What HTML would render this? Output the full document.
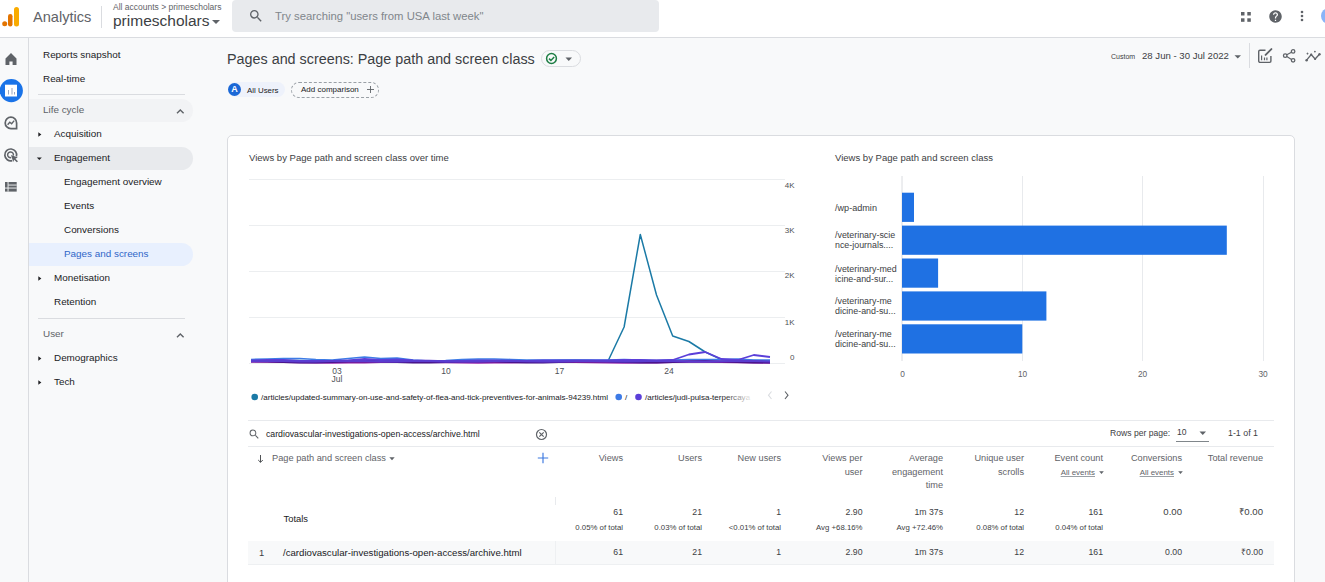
<!DOCTYPE html>
<html><head><meta charset="utf-8">
<style>
*{box-sizing:border-box;margin:0;padding:0}
html,body{width:1325px;height:582px;overflow:hidden;background:#f8f9fa;font-family:"Liberation Sans",sans-serif;color:#202124}
.a{position:absolute;white-space:nowrap}
#hdr{position:absolute;left:0;top:0;width:1325px;height:38px;background:#fff;border-bottom:1px solid #dadce0}
#rail{position:absolute;left:0;top:38px;width:29px;height:544px;border-right:1px solid #dadce0;background:#f8f9fa}
.nav{font-size:9.9px;color:#202124}
.card{position:absolute;left:227px;top:135px;width:1068px;height:460px;background:#fff;border:1px solid #dadce0;border-radius:5px}
</style></head>
<body>
<!-- header -->
<div id="hdr">
  <svg class="a" style="left:0;top:0" width="24" height="37">
    <rect x="14" y="7" width="5" height="19.5" rx="2.5" fill="#f9ab00"/>
    <rect x="8" y="14" width="4.5" height="12.5" rx="2.25" fill="#e37400"/>
    <circle cx="4.7" cy="23.7" r="2.5" fill="#e37400"/>
  </svg>
  <div class="a" style="left:33px;top:9px;font-size:14.6px;color:#5f6368">Analytics</div>
  <div class="a" style="left:101px;top:6px;width:1px;height:22px;background:#dadce0"></div>
  <div class="a" style="left:113px;top:2px;font-size:8.5px;color:#5f6368">All accounts &gt; primescholars</div>
  <div class="a" style="left:113px;top:12px;font-size:15.5px;color:#3c4043">primescholars</div>
  <svg class="a" style="left:212px;top:20px" width="9" height="5"><path d="M0 0h8l-4 4z" fill="#5f6368"/></svg>
  <div class="a" style="left:232px;top:0;width:427px;height:32px;background:#e8eaed;border-radius:4px"></div>
  <svg class="a" style="left:248.4px;top:8px" width="16" height="16" viewBox="0 0 24 24"><path fill="#5f6368" d="M15.5 14h-.79l-.28-.27A6.47 6.47 0 0 0 16 9.5 6.5 6.5 0 1 0 9.5 16c1.61 0 3.09-.59 4.23-1.57l.27.28v.79l5 4.99L20.49 19l-4.99-5zm-6 0C7.01 14 5 11.99 5 9.5S7.01 5 9.5 5 14 7.01 14 9.5 11.99 14 9.5 14z"/></svg>
  <div class="a" style="left:275px;top:10px;font-size:11.3px;color:#80868b">Try searching "users from USA last week"</div>
  <svg class="a" style="left:1241px;top:12px" width="10" height="10"><rect x="0" y="0" width="3.5" height="3.5" fill="#5f6368"/><rect x="6.3" y="0" width="3.5" height="3.5" fill="#5f6368"/><rect x="0" y="6.3" width="3.5" height="3.5" fill="#5f6368"/><rect x="6.3" y="6.3" width="3.5" height="3.5" fill="#5f6368"/></svg>
  <svg class="a" style="left:1268px;top:9px" width="15" height="15" viewBox="0 0 24 24"><path fill="#5f6368" d="M12 2C6.48 2 2 6.48 2 12s4.48 10 10 10 10-4.48 10-10S17.52 2 12 2zm1 17h-2v-2h2v2zm2.07-7.75l-.9.92C13.45 12.9 13 13.5 13 15h-2v-.5c0-1.1.45-2.1 1.17-2.83l1.24-1.26c.37-.36.59-.86.59-1.41 0-1.1-.9-2-2-2s-2 .9-2 2H8c0-2.21 1.79-4 4-4s4 1.79 4 4c0 .88-.36 1.68-.93 2.25z"/></svg>
  <svg class="a" style="left:1300px;top:10px" width="5" height="13"><circle cx="2" cy="2" r="1.3" fill="#5f6368"/><circle cx="2" cy="6" r="1.3" fill="#5f6368"/><circle cx="2" cy="10" r="1.3" fill="#5f6368"/></svg>
  <div class="a" style="left:1321px;top:8px;width:16px;height:16px;border-radius:50%;background:#8ab4f8"></div>
</div>

<!-- rail -->
<div id="rail"></div>
<svg class="a" style="left:0;top:40px" width="28" height="160">
  <path d="M11 13 L16.5 18.5 V25 H12.6 V21.5 H9.4 V25 H5.5 V18.5 Z" fill="#5f6368"/>
  <circle cx="11.3" cy="50.6" r="11.6" fill="#1a73e8"/>
  <rect x="5" y="44.7" width="12" height="11.8" fill="#fff"/>
  <rect x="8" y="50" width="1" height="4.5" fill="#9aa6c0"/>
  <rect x="11.5" y="48" width="1" height="6.5" fill="#9aa6c0"/>
  <rect x="14" y="52" width="1" height="2.5" fill="#9aa6c0"/>
  <path d="M10.9 88.6 A5.7 5.7 0 1 1 16.6 82.9 V88.6 Z" fill="none" stroke="#5f6368" stroke-width="1.7" stroke-linejoin="miter"/>
  <path d="M7.6 84.8 L9.8 82.3 L11.6 83.8 L14.2 80.6" fill="none" stroke="#5f6368" stroke-width="1.4"/>
  <path d="M16.4 116.5 A5.9 5.9 0 1 0 12.2 120.6" fill="none" stroke="#5f6368" stroke-width="1.7"/>
  <path d="M13.3 115.6 A2.9 2.9 0 1 0 11.2 117.6" fill="none" stroke="#5f6368" stroke-width="1.5"/>
  <path d="M11 115 L17.8 117.5 L15.4 118.7 L18 121.3 L16.8 122.3 L14.2 119.7 L13.2 122 Z" fill="#5f6368"/>
  <rect x="5" y="142" width="11.7" height="9.6" fill="#5f6368"/>
  <rect x="8.2" y="144.6" width="8.5" height="0.9" fill="#f8f9fa"/>
  <rect x="5" y="147.6" width="11.7" height="0.9" fill="#f8f9fa"/>
  <rect x="7.6" y="142" width="0.9" height="9.6" fill="#f8f9fa"/>
</svg>

<div id="nav">
<div class="a nav" style="left:43px;top:43px;line-height:24px;color:#202124">Reports snapshot</div>
<div class="a nav" style="left:43px;top:67px;line-height:24px;color:#202124">Real-time</div>
<div class="a" style="left:29px;top:99px;width:164px;height:23px;background:#f2f3f5;border-radius:0 12px 12px 0"></div>
<div class="a nav" style="left:43px;top:98px;line-height:24px;color:#5f6368">Life cycle</div>
<svg class="a" style="left:175.5px;top:107.5px" width="9" height="7"><path d="M1 5.3L4.3 2L7.6 5.3" stroke="#5f6368" stroke-width="1.4" fill="none"/></svg>
<div class="a nav" style="left:54px;top:122px;line-height:24px;color:#202124">Acquisition</div>
<svg class="a" style="left:38px;top:131px" width="5" height="7"><path d="M0.3 1.2L3.4 3.5L0.3 5.8z" fill="#202124"/></svg>
<div class="a" style="left:29px;top:147px;width:164px;height:23px;background:#e8eaed;border-radius:0 12px 12px 0"></div>
<div class="a nav" style="left:54px;top:146px;line-height:24px;color:#202124">Engagement</div>
<svg class="a" style="left:36px;top:156px" width="7" height="5"><path d="M0.8 1.6L5.8 1.6L3.3 3.9z" fill="#202124"/></svg>
<div class="a nav" style="left:64px;top:170px;line-height:24px;color:#202124">Engagement overview</div>
<div class="a nav" style="left:64px;top:194px;line-height:24px;color:#202124">Events</div>
<div class="a nav" style="left:64px;top:218px;line-height:24px;color:#202124">Conversions</div>
<div class="a" style="left:29px;top:243px;width:164px;height:23px;background:#e8f0fe;border-radius:0 12px 12px 0"></div>
<div class="a nav" style="left:64px;top:242px;line-height:24px;color:#2f66c8">Pages and screens</div>
<div class="a nav" style="left:54px;top:266px;line-height:24px;color:#202124">Monetisation</div>
<svg class="a" style="left:38px;top:275px" width="5" height="7"><path d="M0.3 1.2L3.4 3.5L0.3 5.8z" fill="#202124"/></svg>
<div class="a nav" style="left:54px;top:290px;line-height:24px;color:#202124">Retention</div>
<div class="a nav" style="left:43px;top:322px;line-height:24px;color:#5f6368">User</div>
<svg class="a" style="left:175.5px;top:331.5px" width="9" height="7"><path d="M1 5.3L4.3 2L7.6 5.3" stroke="#5f6368" stroke-width="1.4" fill="none"/></svg>
<div class="a nav" style="left:54px;top:346px;line-height:24px;color:#202124">Demographics</div>
<svg class="a" style="left:38px;top:355px" width="5" height="7"><path d="M0.3 1.2L3.4 3.5L0.3 5.8z" fill="#202124"/></svg>
<div class="a nav" style="left:54px;top:370px;line-height:24px;color:#202124">Tech</div>
<svg class="a" style="left:38px;top:379px" width="5" height="7"><path d="M0.3 1.2L3.4 3.5L0.3 5.8z" fill="#202124"/></svg>
<div class="a" style="left:38px;top:94px;width:147px;height:1px;background:#dadce0"></div>
<div class="a" style="left:38px;top:318px;width:147px;height:1px;background:#dadce0"></div>
</div>
<div id="main">
<div class="a" style="left:227px;top:52px;font-size:14.35px;line-height:1;color:#3c4043">Pages and screens: Page path and screen class</div>
<div class="a" style="left:541px;top:50px;width:40px;height:17px;border:1px solid #dadce0;border-radius:9px;background:#f8f9fa"></div>
<svg class="a" style="left:545px;top:52px" width="13" height="13"><circle cx="6.5" cy="6.5" r="4.9" fill="none" stroke="#1e7e45" stroke-width="1.5"/><path d="M4 6.6L5.9 8.4L9.2 5" fill="none" stroke="#1e7e45" stroke-width="1.5"/></svg>
<svg class="a" style="left:565px;top:57px" width="8" height="5"><path d="M0.5 0.5h6.5l-3.25 3.5z" fill="#5f6368"/></svg>

<div class="a" style="left:228px;top:82px;width:57px;height:15px;border-radius:8px;background:#eef2fb"></div>
<div class="a" style="left:228px;top:83px;width:13px;height:13px;border-radius:50%;background:#1b68d6;color:#fff;font-size:9px;font-weight:bold;line-height:13px;text-align:center">A</div>
<div class="a" style="left:247px;top:86.5px;font-size:7.9px;line-height:1;color:#202124">All Users</div>
<div class="a" style="left:291px;top:82px;width:88px;height:16px;border:1px dashed #9aa0a6;border-radius:8px"></div>
<div class="a" style="left:301px;top:86.3px;font-size:8px;line-height:1;color:#202124">Add comparison</div>
<svg class="a" style="left:366px;top:85px" width="9" height="9"><path d="M4.5 1v7M1 4.5h7" stroke="#5f6368" stroke-width="0.9"/></svg>

<div class="a" style="left:1111px;top:53px;font-size:7px;line-height:1;color:#3c4043">Custom</div>
<div class="a" style="left:1142px;top:51px;font-size:9.6px;line-height:1;color:#3c4043">28 Jun - 30 Jul 2022</div>
<svg class="a" style="left:1234px;top:55px" width="8" height="4"><path d="M0.5 0.2h6.5l-3.25 3.3z" fill="#5f6368"/></svg>
<div class="a" style="left:1249px;top:43px;width:1px;height:25px;background:#dadce0"></div>
<svg class="a" style="left:1250px;top:42px" width="75" height="28" viewBox="0 0 75 28">
  <path d="M15.5 8.3H10A1.3 1.3 0 0 0 8.7 9.6V19.1A1.3 1.3 0 0 0 10 20.4H19.6A1.3 1.3 0 0 0 20.9 19.1V14" fill="none" stroke="#5f6368" stroke-width="1.4"/>
  <path d="M15.6 12.9L21.4 7.1" stroke="#5f6368" stroke-width="1.9" stroke-linecap="round"/>
  <path d="M11.6 18.2V13.5M14.5 18.2V15.5M16.9 18.2V15.5" stroke="#5f6368" stroke-width="1.2"/>
  <circle cx="43.1" cy="9.4" r="1.75" fill="none" stroke="#5f6368" stroke-width="1.3"/>
  <circle cx="35.2" cy="13.7" r="1.75" fill="none" stroke="#5f6368" stroke-width="1.3"/>
  <circle cx="43.1" cy="18.3" r="1.75" fill="none" stroke="#5f6368" stroke-width="1.3"/>
  <path d="M36.8 12.8L41.5 10.3M36.8 14.6L41.5 17.4" stroke="#5f6368" stroke-width="1.2"/>
  <path d="M56.6 18.2L61.2 12.6L65.1 17L69.5 12.3" fill="none" stroke="#5f6368" stroke-width="1.3"/>
  <circle cx="56.6" cy="18.2" r="1.2" fill="#5f6368"/><circle cx="61.2" cy="12.6" r="1.1" fill="#5f6368"/><circle cx="65.1" cy="17" r="1.1" fill="#5f6368"/><circle cx="69.5" cy="12.3" r="1.2" fill="#5f6368"/>
  <path d="M57.5 10.6V12.6M56.5 11.6H58.5" stroke="#5f6368" stroke-width="0.8"/>
  <circle cx="64.9" cy="9.6" r="0.9" fill="#5f6368"/>
</svg>

<div class="card"></div>
<div class="a" style="left:249px;top:153px;font-size:9.53px;line-height:1;color:#3c4043">Views by Page path and screen class over time</div>
<!--LC-->
<svg class="a" style="left:0;top:0" width="1325" height="582">
<g stroke="#eceef0" stroke-width="1">
<path d="M249 179.5H785M249 225.5H785M249 271.5H785M249 317.5H785M249 363.5H785"/>
</g>
<g fill="#4d5156" font-size="8" font-family="Liberation Sans" text-anchor="end">
<text x="794.5" y="187.7">4K</text><text x="794.5" y="232.6">3K</text><text x="794.5" y="278.2">2K</text><text x="794.5" y="324.5">1K</text><text x="794.5" y="360.2">0</text>
</g>
<g fill="#4d5156" font-size="8.5" font-family="Liberation Sans" text-anchor="middle">
<text x="337" y="374.2">03</text><text x="337" y="381.8">Jul</text><text x="446" y="374.2">10</text><text x="559.5" y="374.2">17</text><text x="669" y="374.2">24</text>
</g>
<g fill="none" stroke-linejoin="round" stroke-width="1.5">
<polyline points="251.0,360.7 267.2,360.4 283.4,360.3 299.7,360.6 315.9,361.0 332.1,361.1 348.3,360.8 364.5,360.4 380.8,360.3 397.0,360.5 413.2,360.9 429.4,361.1 445.6,360.9 461.9,360.5 478.1,360.3 494.3,360.4 510.5,360.8 526.7,361.1 543.0,361.0 559.2,360.6 575.4,360.3 591.6,360.4 607.8,361.5 624.1,327.0 640.3,234.5 656.5,295.0 672.7,336.0 688.9,341.5 705.2,352.0 721.4,359.5 737.6,360.5 753.8,360.5 770.0,361.0" stroke="#1b7aa6" stroke-width="1.5"/>
<polyline points="251.0,359.5 267.2,359.0 283.4,358.5 299.7,358.5 315.9,359.5 332.1,360.0 348.3,358.5 364.5,357.0 380.8,358.5 397.0,358.0 413.2,360.0 429.4,361.0 445.6,360.5 461.9,359.5 478.1,359.0 494.3,359.0 510.5,359.5 526.7,360.0 543.0,360.0 559.2,360.0 575.4,360.0 591.6,360.0 607.8,360.0 624.1,359.5 640.3,360.0 656.5,360.5 672.7,360.0 688.9,359.5 705.2,359.5 721.4,359.5 737.6,359.0 753.8,360.0 770.0,360.0" stroke="#3d7be6" stroke-width="1.6"/>
<polyline points="251.0,361.8 267.2,361.7 283.4,361.9 299.7,362.2 315.9,362.5 332.1,362.7 348.3,362.6 364.5,362.4 380.8,362.0 397.0,361.8 413.2,361.7 429.4,361.9 445.6,362.2 461.9,362.5 478.1,362.7 494.3,362.6 510.5,362.4 526.7,362.0 543.0,361.8 559.2,361.7 575.4,361.9 591.6,362.2 607.8,362.5 624.1,362.7 640.3,362.6 656.5,362.4 672.7,362.0 688.9,361.8 705.2,361.7 721.4,361.9 737.6,362.2 753.8,362.5 770.0,362.7" stroke="#9c27b0" stroke-width="2"/>
<polyline points="251.0,361.2 267.2,361.4 283.4,361.9 299.7,362.3 315.9,362.3 332.1,361.9 348.3,361.4 364.5,361.2 380.8,361.4 397.0,361.9 413.2,362.3 429.4,362.3 445.6,361.9 461.9,361.4 478.1,361.2 494.3,361.4 510.5,362.0 526.7,362.4 543.0,362.3 559.2,361.9 575.4,361.4 591.6,361.2 607.8,361.5 624.1,362.0 640.3,362.4 656.5,362.3 672.7,361.9 688.9,361.4 705.2,361.2 721.4,361.5 737.6,362.0 753.8,362.4 770.0,362.3" stroke="#4a148c" stroke-width="2.2"/>
<polyline points="251.0,360.5 267.2,360.0 283.4,360.0 299.7,361.0 315.9,361.0 332.1,361.0 348.3,360.5 364.5,359.0 380.8,360.0 397.0,359.5 413.2,360.5 429.4,361.0 445.6,361.5 461.9,361.0 478.1,360.5 494.3,360.5 510.5,361.0 526.7,361.0 543.0,360.5 559.2,360.5 575.4,360.5 591.6,360.5 607.8,360.5 624.1,360.0 640.3,360.0 656.5,360.5 672.7,360.0 688.9,354.5 705.2,352.0 721.4,359.0 737.6,360.0 753.8,355.0 770.0,357.0" stroke="#5b3fd9" stroke-width="1.8"/>
<polyline points="251.0,361.2 267.2,360.8 283.4,361.0 299.7,361.5 315.9,361.6 332.1,361.1 348.3,360.8 364.5,361.1 380.8,361.5 397.0,361.5 413.2,361.0 429.4,360.8 445.6,361.2 461.9,361.6 478.1,361.4 494.3,361.0 510.5,360.8 526.7,361.2 543.0,361.6 559.2,361.4 575.4,360.9 591.6,360.9 607.8,361.3 624.1,361.6 640.3,361.3 656.5,360.8 672.7,360.9 688.9,361.4 705.2,361.6 721.4,361.2 737.6,360.8 753.8,361.0 770.0,361.5" stroke="#5a3ccf" stroke-width="2"/>
</g>
<circle cx="254.7" cy="397" r="3.3" fill="#1b7aa6"/>
<text x="261" y="400" font-size="8.05" font-family="Liberation Sans" fill="#202124">/articles/updated-summary-on-use-and-safety-of-flea-and-tick-preventives-for-animals-94239.html</text>
<circle cx="618.7" cy="397" r="3.3" fill="#3d7be6"/>
<text x="625" y="400" font-size="8.05" font-family="Liberation Sans" fill="#202124">/</text>
<circle cx="638.5" cy="397" r="3.3" fill="#5b3fd9"/>
<defs><linearGradient id="fade" x1="0" x2="1"><stop offset="0.75" stop-color="#202124"/><stop offset="1" stop-color="#202124" stop-opacity="0.1"/></linearGradient></defs>
<text x="645" y="400" font-size="8.05" font-family="Liberation Sans" fill="url(#fade)">/articles/judi-pulsa-terpercaya</text>
<path d="M771.5 391.5L768.5 395.2L771.5 399" fill="none" stroke="#dadce0" stroke-width="1.1"/>
<path d="M785 391.5L788 395.2L785 399" fill="none" stroke="#5f6368" stroke-width="1.1"/>
</svg>
<!--/LC-->
<div class="a" style="left:835px;top:153px;font-size:9.52px;line-height:1;color:#3c4043">Views by Page path and screen class</div>
<svg class="a" style="left:0;top:0" width="1325" height="582">
<path d="M1022.5 176V361M1142.5 176V361M1263.5 176V361" stroke="#e8eaed" stroke-width="1"/>
<path d="M902 176V361" stroke="#dadce0" stroke-width="1"/>
<rect x="902" y="192.7" width="12.0" height="29.2" fill="#1f71e3"/>
<text x="835" y="210.7" font-size="9.1" font-family="Liberation Sans" fill="#3c4043">/wp-admin</text>
<rect x="902" y="225.6" width="324.8" height="29.2" fill="#1f71e3"/>
<text x="835" y="238.3" font-size="8.9" font-family="Liberation Sans" fill="#3c4043">/veterinary-scie</text>
<text x="835" y="248.1" font-size="8.9" font-family="Liberation Sans" fill="#3c4043">nce-journals....</text>
<rect x="902" y="258.5" width="36.1" height="29.2" fill="#1f71e3"/>
<text x="835" y="271.9" font-size="8.9" font-family="Liberation Sans" fill="#3c4043">/veterinary-med</text>
<text x="835" y="281.6" font-size="8.9" font-family="Liberation Sans" fill="#3c4043">icine-and-sur...</text>
<rect x="902" y="291.4" width="144.4" height="29.2" fill="#1f71e3"/>
<text x="835" y="304.4" font-size="8.9" font-family="Liberation Sans" fill="#3c4043">/veterinary-me</text>
<text x="835" y="314.1" font-size="8.9" font-family="Liberation Sans" fill="#3c4043">dicine-and-su...</text>
<rect x="902" y="324.3" width="120.3" height="29.2" fill="#1f71e3"/>
<text x="835" y="337.2" font-size="8.9" font-family="Liberation Sans" fill="#3c4043">/veterinary-me</text>
<text x="835" y="346.9" font-size="8.9" font-family="Liberation Sans" fill="#3c4043">dicine-and-su...</text>
<g fill="#5f6368" font-size="8.3" font-family="Liberation Sans" text-anchor="middle"><text x="902.5" y="377">0</text><text x="1022.5" y="377">10</text><text x="1142.5" y="377">20</text><text x="1263" y="377">30</text></g>
</svg>
<!--TABLE-->
<div class="a" style="left:248px;top:420px;width:1026px;height:1px;background:#e8eaed"></div>
<div class="a" style="left:248px;top:446px;width:1026px;height:1px;background:#e8eaed"></div>
<svg class="a" style="left:248px;top:428px" width="12.5" height="12.5" viewBox="0 0 24 24"><path fill="#5f6368" d="M15.5 14h-.79l-.28-.27A6.47 6.47 0 0 0 16 9.5 6.5 6.5 0 1 0 9.5 16c1.61 0 3.09-.59 4.23-1.57l.27.28v.79l5 4.99L20.49 19l-4.99-5zm-6 0C7.01 14 5 11.990 5 9.5S7.01 5 9.5 5 14 7.01 14 9.5 11.99 14 9.5 14z"/></svg>
<div class="a" style="left:266px;top:430px;font-size:8.73px;line-height:1;color:#202124">cardiovascular-investigations-open-access/archive.html</div>
<svg class="a" style="left:535px;top:428px" width="13" height="13"><circle cx="6.5" cy="6.5" r="5" fill="none" stroke="#5f6368" stroke-width="1.2"/><path d="M4.3 4.3L8.7 8.7M8.7 4.3L4.3 8.7" stroke="#5f6368" stroke-width="1.2"/></svg>
<div class="a" style="left:1110px;top:428.5px;font-size:8.6px;line-height:1;color:#3c4043">Rows per page:</div>
<div class="a" style="left:1177px;top:427.5px;font-size:8.6px;line-height:1;color:#3c4043">10</div>
<div class="a" style="left:1176px;top:441px;width:33px;height:1px;background:#80868b"></div>
<svg class="a" style="left:1199px;top:431px" width="8" height="5"><path d="M0.5 0.5h6.5l-3.25 3.5z" fill="#5f6368"/></svg>
<div class="a" style="left:1228px;top:428.5px;font-size:8.85px;line-height:1;color:#3c4043">1-1 of 1</div>
<svg class="a" style="left:257px;top:454px" width="8" height="10"><path d="M3.5 1V8.3M1.2 6L3.5 8.3L5.8 6" fill="none" stroke="#3c4043" stroke-width="0.9"/></svg>
<div class="a" style="left:272px;top:454px;font-size:9.24px;line-height:1;color:#5f6368">Page path and screen class</div>
<svg class="a" style="left:389px;top:456.5px" width="7" height="4"><path d="M0.3 0.3h5.4l-2.7 3z" fill="#5f6368"/></svg>
<svg class="a" style="left:537px;top:452px" width="12" height="12"><path d="M6 0.8V11.2M0.8 6H11.2" stroke="#3b78e0" stroke-width="1.15"/></svg>
<div class="a" style="right:702px;top:453.9px;font-size:9.2px;line-height:1;color:#5f6368">Views</div>
<div class="a" style="right:623px;top:453.9px;font-size:9.2px;line-height:1;color:#5f6368">Users</div>
<div class="a" style="right:544px;top:453.9px;font-size:9.2px;line-height:1;color:#5f6368">New users</div>
<div class="a" style="right:462.5px;top:453.9px;font-size:9.2px;line-height:1;color:#5f6368">Views per</div>
<div class="a" style="right:462.5px;top:467.5px;font-size:9.2px;line-height:1;color:#5f6368">user</div>
<div class="a" style="right:382px;top:453.9px;font-size:9.2px;line-height:1;color:#5f6368">Average</div>
<div class="a" style="right:382px;top:467.5px;font-size:9.2px;line-height:1;color:#5f6368">engagement</div>
<div class="a" style="right:382px;top:481.1px;font-size:9.2px;line-height:1;color:#5f6368">time</div>
<div class="a" style="right:301px;top:453.9px;font-size:9.2px;line-height:1;color:#5f6368">Unique user</div>
<div class="a" style="right:301px;top:467.5px;font-size:9.2px;line-height:1;color:#5f6368">scrolls</div>
<div class="a" style="right:222px;top:453.9px;font-size:9.2px;line-height:1;color:#5f6368">Event count</div>
<div class="a" style="right:143px;top:453.9px;font-size:9.2px;line-height:1;color:#5f6368">Conversions</div>
<div class="a" style="right:62px;top:453.9px;font-size:9.2px;line-height:1;color:#5f6368">Total revenue</div>
<div class="a" style="right:230px;top:468.5px;font-size:7.93px;line-height:1;color:#5f6368;text-decoration:underline;text-decoration-color:#9aa0a6">All events</div>
<svg class="a" style="left:1099px;top:471px" width="6" height="4"><path d="M0.2 0.2h4.6l-2.3 2.8z" fill="#5f6368"/></svg>
<div class="a" style="right:151px;top:468.5px;font-size:7.93px;line-height:1;color:#5f6368;text-decoration:underline;text-decoration-color:#9aa0a6">All events</div>
<svg class="a" style="left:1178px;top:471px" width="6" height="4"><path d="M0.2 0.2h4.6l-2.3 2.8z" fill="#5f6368"/></svg>
<div class="a" style="left:283.5px;top:513.8px;font-size:9.4px;line-height:1;color:#202124">Totals</div>
<div class="a" style="left:555px;top:497px;width:1px;height:8px;background:#e8eaed"></div>
<div class="a" style="right:702px;top:508.1px;font-size:8.7px;line-height:1;color:#3c4043">61</div>
<div class="a" style="right:702px;top:523.5px;font-size:7.8px;line-height:1;color:#3c4043">0.05% of total</div>
<div class="a" style="right:623px;top:508.1px;font-size:8.7px;line-height:1;color:#3c4043">21</div>
<div class="a" style="right:623px;top:523.5px;font-size:7.8px;line-height:1;color:#3c4043">0.03% of total</div>
<div class="a" style="right:544px;top:508.1px;font-size:8.7px;line-height:1;color:#3c4043">1</div>
<div class="a" style="right:544px;top:523.5px;font-size:7.8px;line-height:1;color:#3c4043">&lt;0.01% of total</div>
<div class="a" style="right:462.5px;top:508.1px;font-size:8.7px;line-height:1;color:#3c4043">2.90</div>
<div class="a" style="right:462.5px;top:523.5px;font-size:7.8px;line-height:1;color:#3c4043">Avg +68.16%</div>
<div class="a" style="right:382px;top:508.1px;font-size:8.7px;line-height:1;color:#3c4043">1m 37s</div>
<div class="a" style="right:382px;top:523.5px;font-size:7.8px;line-height:1;color:#3c4043">Avg +72.46%</div>
<div class="a" style="right:301px;top:508.1px;font-size:8.7px;line-height:1;color:#3c4043">12</div>
<div class="a" style="right:301px;top:523.5px;font-size:7.8px;line-height:1;color:#3c4043">0.08% of total</div>
<div class="a" style="right:222px;top:508.1px;font-size:8.7px;line-height:1;color:#3c4043">161</div>
<div class="a" style="right:222px;top:523.5px;font-size:7.8px;line-height:1;color:#3c4043">0.04% of total</div>
<div class="a" style="right:143px;top:507.2px;font-size:9.6px;line-height:1;color:#3c4043">0.00</div>
<div class="a" style="right:62px;top:507.2px;font-size:9.6px;line-height:1;color:#3c4043">₹0.00</div>
<div class="a" style="left:248px;top:541px;width:1026px;height:24px;background:#f8f9fa;border-bottom:1px solid #eef0f2"></div>
<div class="a" style="left:259px;top:548px;font-size:9.4px;line-height:1;color:#3c4043">1</div>
<div class="a" style="left:283px;top:547.8px;font-size:9.64px;line-height:1;color:#202124">/cardiovascular-investigations-open-access/archive.html</div>
<div class="a" style="right:702px;top:548.2px;font-size:8.7px;line-height:1;color:#3c4043">61</div>
<div class="a" style="right:623px;top:548.2px;font-size:8.7px;line-height:1;color:#3c4043">21</div>
<div class="a" style="right:544px;top:548.2px;font-size:8.7px;line-height:1;color:#3c4043">1</div>
<div class="a" style="right:462.5px;top:548.2px;font-size:8.7px;line-height:1;color:#3c4043">2.90</div>
<div class="a" style="right:382px;top:548.2px;font-size:8.7px;line-height:1;color:#3c4043">1m 37s</div>
<div class="a" style="right:301px;top:548.2px;font-size:8.7px;line-height:1;color:#3c4043">12</div>
<div class="a" style="right:222px;top:548.2px;font-size:8.7px;line-height:1;color:#3c4043">161</div>
<div class="a" style="right:143px;top:548.2px;font-size:8.7px;line-height:1;color:#3c4043">0.00</div>
<div class="a" style="right:62px;top:548.2px;font-size:8.7px;line-height:1;color:#3c4043">₹0.00</div>
<div class="a" style="left:555px;top:541px;width:1px;height:24px;background:#eef0f2"></div>
<!--/TABLE-->
</div>
</body></html>
